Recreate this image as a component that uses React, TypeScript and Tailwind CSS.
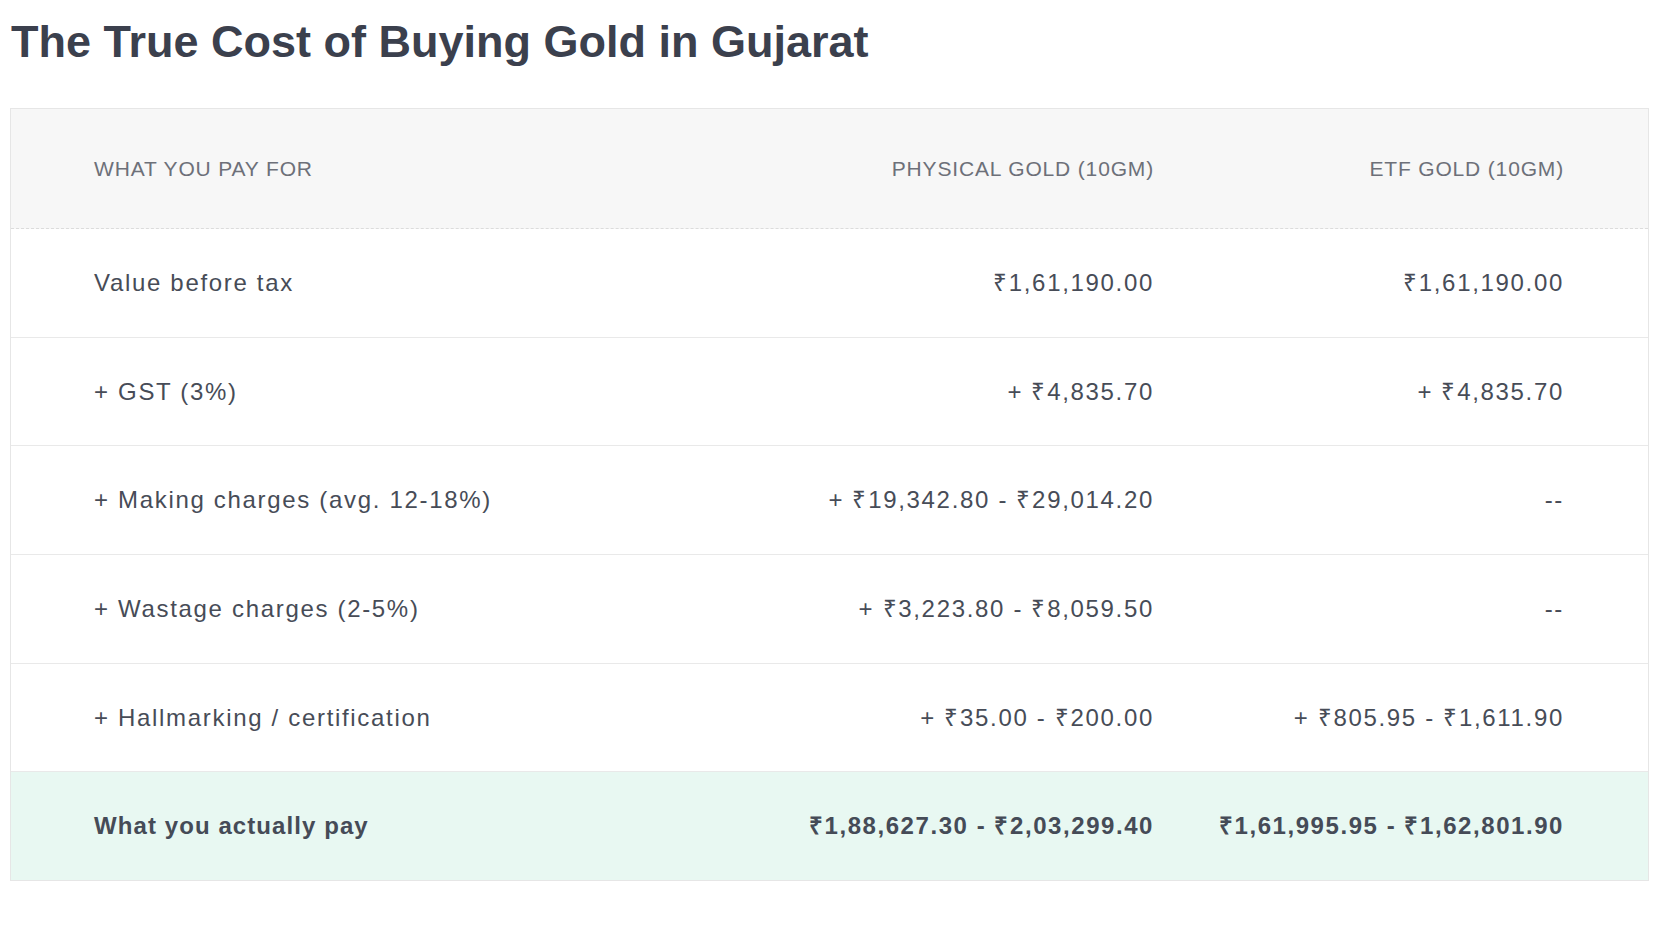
const rows = [
  { label: 'Value before tax', physical: '₹1,61,190.00', etf: '₹1,61,190.00' },
  { label: '+ GST (3%)', physical: '+ ₹4,835.70', etf: '+ ₹4,835.70' },
  { label: '+ Making charges (avg. 12-18%)', physical: '+ ₹19,342.80 - ₹29,014.20', etf: '--' },
  { label: '+ Wastage charges (2-5%)', physical: '+ ₹3,223.80 - ₹8,059.50', etf: '--' },
  { label: '+ Hallmarking / certification', physical: '+ ₹35.00 - ₹200.00', etf: '+ ₹805.95 - ₹1,611.90' },
];

export default function App() {
  return (
    <div className="min-h-screen bg-white font-['Liberation_Sans',Arial,sans-serif]">
      <h1 className="pt-[15px] pl-[11px] text-[45px] leading-[54px] font-bold text-[#3b404d]">
        The True Cost of Buying Gold in Gujarat
      </h1>

      <div className="mt-[39px] ml-[10px] w-[1639px] border border-[#e6e6e6]">
        {/* Header */}
        <div className="grid h-[120px] grid-cols-[1fr_560px_410px] items-center border-b border-dashed border-[#dcdcdc] bg-[#f7f7f7] pl-[83px] pr-[84px] text-[21px] uppercase tracking-[0.04em] text-[#6d7079]">
          <div>What you pay for</div>
          <div className="text-right">Physical Gold (10gm)</div>
          <div className="text-right">ETF Gold (10gm)</div>
        </div>

        {/* Rows */}
        {rows.map((r) => (
          <div
            key={r.label}
            className="grid h-[108.7px] grid-cols-[1fr_560px_410px] items-center border-b border-[#e9e9e9] pl-[83px] pr-[84px] text-[24px] tracking-[0.07em] text-[#474c57]"
          >
            <div>{r.label}</div>
            <div className="text-right">{r.physical}</div>
            <div className="text-right">{r.etf}</div>
          </div>
        ))}

        {/* Total */}
        <div className="grid h-[107.7px] grid-cols-[1fr_560px_410px] items-center bg-[#e8f8f2] pl-[83px] pr-[84px] text-[24px] font-semibold tracking-[0.065em] text-[#454b57]">
          <div className="tracking-[0.045em]">What you actually pay</div>
          <div className="text-right">₹1,88,627.30 - ₹2,03,299.40</div>
          <div className="text-right">₹1,61,995.95 - ₹1,62,801.90</div>
        </div>
      </div>
    </div>
  );
}
